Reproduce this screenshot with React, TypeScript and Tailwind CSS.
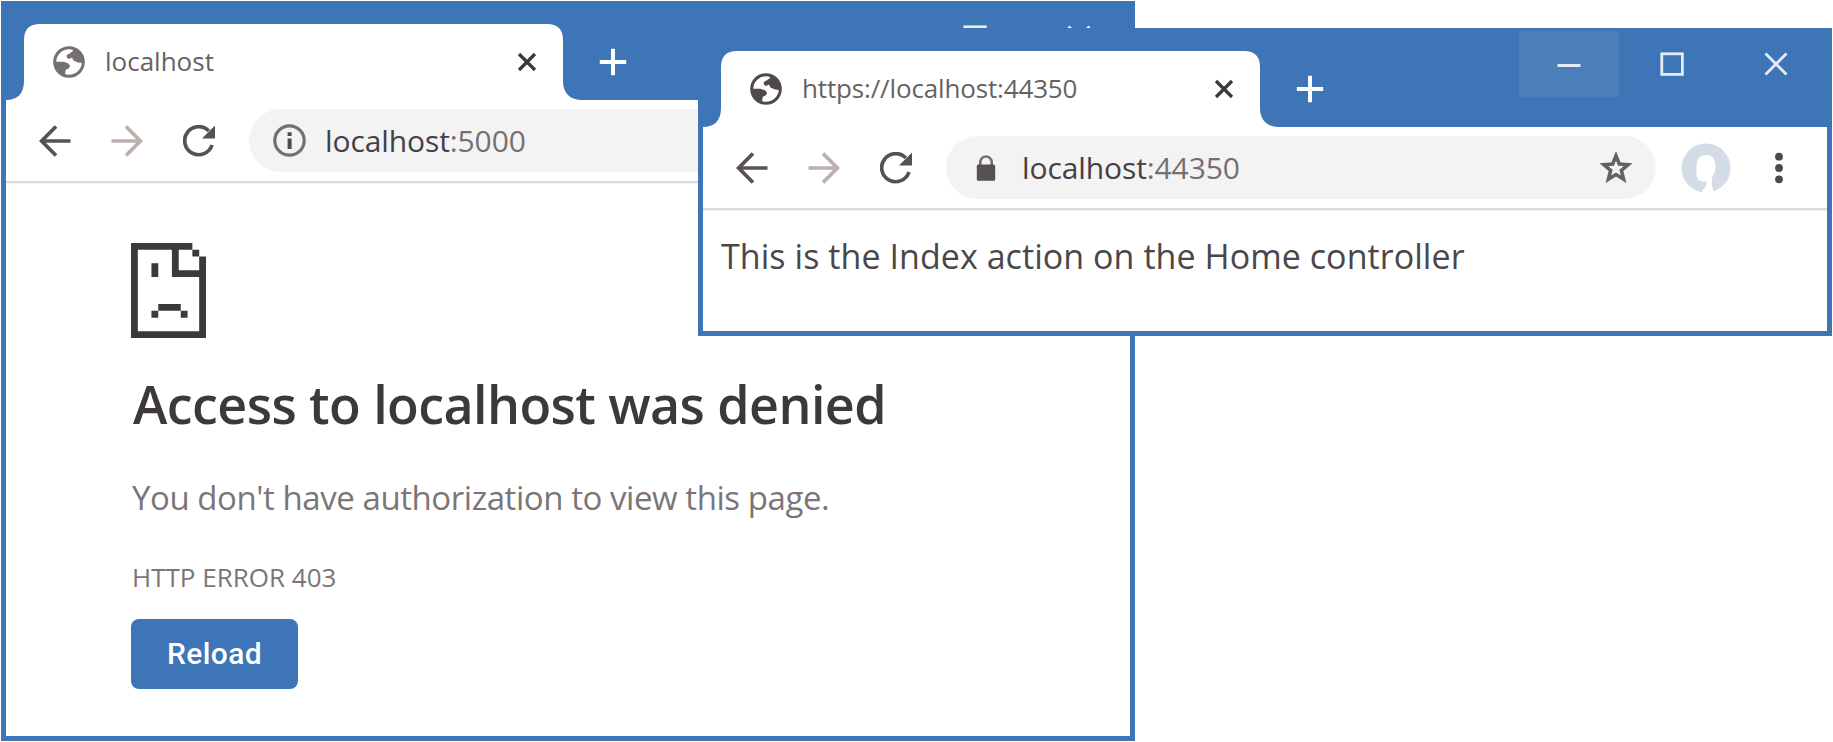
import type { ReactNode } from "react";

function Globe({ className }: { className: string }) {
  return (
    <svg className={`h-8 w-8 ${className}`} viewBox="0 0 32 32">
      <circle cx="16" cy="16" r="14.3" fill="none" stroke="currentColor" strokeWidth="3" />
      <path
        fill="currentColor"
        d="M19.5 2.5 20 5 17 7.200 13.800 9 13.800 11.400 16 13 19 11.600 20.500 14.500 25 16.500 30 17 29 9 24 3.500ZM2 15.800H10.500L15 17.200 17.200 20 15.500 22.400 12.800 23.700 12 28 11 30 5 26 1.500 19Z"
      />
    </svg>
  );
}

function TabClose() {
  return (
    <svg className="h-5 w-5 text-[#3c383b]" viewBox="0 0 20 20">
      <path d="M2 2 18 18M18 2 2 18" stroke="currentColor" strokeWidth="3.200" />
    </svg>
  );
}

function Plus() {
  return (
    <svg className="h-7 w-7 text-white" viewBox="0 0 28 28">
      <path d="M14 .8V27.200M.8 14H27.200" stroke="currentColor" strokeWidth="4" />
    </svg>
  );
}

function Arrow({ className }: { className: string }) {
  return (
    <svg className={`h-8 w-8 ${className}`} viewBox="0 0 32 32" fill="none">
      <path d="M17 1.500 2.600 16 17 30.500M3 16H31.500" stroke="currentColor" strokeWidth="3.700" />
    </svg>
  );
}

function Refresh() {
  return (
    <svg className="h-8 w-8 text-[#575154]" viewBox="0 0 32 32" fill="none">
      <path d="M29 20A14 14 0 1 1 25.800 6" stroke="currentColor" strokeWidth="3.700" />
      <path d="M32 .5V13.500H19Z" fill="currentColor" />
    </svg>
  );
}

function Info() {
  return (
    <svg className="h-[33px] w-[33px] text-[#766f71]" viewBox="0 0 33 33">
      <circle cx="16.500" cy="16.500" r="14.700" fill="none" stroke="currentColor" strokeWidth="3.200" />
      <path d="M14.600 8.200h4v3.800h-4zM14.600 14.500h4v10.500h-4z" fill="#4f494c" />
    </svg>
  );
}

function Lock() {
  return (
    <svg className="h-[26px] w-5 text-[#575154]" viewBox="0 0 20 26">
      <path d="M4.300 11V7.200a5.700 5.700 0 0 1 11.400 0V11" fill="none" stroke="#766f71" strokeWidth="2.600" />
      <rect x=".8" y="9.500" width="18.400" height="16.300" rx="1.500" fill="currentColor" />
    </svg>
  );
}

function Star() {
  return (
    <svg className="h-8 w-8 text-[#686164]" viewBox="0 0 32 32">
      <path
        d="M16 3.800 19.300 12 28.200 12.700 21.400 18.500 23.600 27.200 16 22.500 8.400 27.200 10.600 18.500 3.800 12.700 12.700 12Z"
        fill="none"
        stroke="currentColor"
        strokeWidth="3.600"
      />
    </svg>
  );
}

function Avatar() {
  return (
    <svg className="h-[50px] w-[50px]" viewBox="0 0 50 50">
      <circle cx="25" cy="25" r="24.500" fill="#d3dce7" />
      <path
        d="M25 12C18.500 12 15.500 16.500 15.500 23V30C15.500 35.500 17.500 38 21.500 38.500H26C26 42 24 45 21.500 47.500L21 50H33L32 46C30.500 43 30.500 40 31 36 31.500 32 34.500 30 34.500 23 34.500 16.500 31.500 12 25 12Z"
        fill="#fff"
      />
    </svg>
  );
}

function Menu() {
  return (
    <svg className="h-8 w-2 text-[#4f494c]" viewBox="0 0 8 32" fill="currentColor">
      <circle cx="4" cy="4.700" r="3.900" />
      <circle cx="4" cy="16" r="3.900" />
      <circle cx="4" cy="27.300" r="3.900" />
    </svg>
  );
}

function WindowControls({ highlight }: { highlight: string }) {
  return (
    <div className="mr-[5px] flex h-[66px] text-[#e6edf5]">
      <div className={`flex w-[100px] items-center justify-center ${highlight}`}>
        <svg className="h-6 w-6" viewBox="0 0 24 24">
          <path d="M.5 13.500H23.500" stroke="currentColor" strokeWidth="3" />
        </svg>
      </div>
      <div className="flex w-[106px] items-center justify-center">
        <svg className="h-6 w-6" viewBox="0 0 24 24">
          <rect x="1.800" y="1.800" width="20.600" height="20.600" fill="none" stroke="currentColor" strokeWidth="2.800" />
        </svg>
      </div>
      <div className="flex w-[102px] items-center justify-center">
        <svg className="h-6 w-6" viewBox="0 0 24 24">
          <path d="M1.500 1.500 22.500 22.500M22.500 1.500 1.500 22.500" stroke="currentColor" strokeWidth="2.800" />
        </svg>
      </div>
    </div>
  );
}

type WindowProps = {
  frame: string;
  highlight?: string;
  title: ReactNode;
  globe: string;
  badge: ReactNode;
  port: string;
  children: ReactNode;
};

function BrowserWindow({ frame, highlight = "", title, globe, badge, port, children }: WindowProps) {
  return (
    <section className={`absolute flex w-[1134px] flex-col bg-[#3d75b6] ${frame}`}>
      <header className="flex h-[99px] shrink-0 items-start justify-between pl-[23px]">
        <div className="flex pt-[23px]">
          <div className="relative flex h-[76px] w-[539px] items-center justify-between pr-[26px] pl-[29px]">
            <svg className="absolute top-0 -left-[18px] h-[76px] w-[575px]" viewBox="0 0 575 76">
              <path
                d="M0 76C11 76 18 70 18 57V16Q18 0 34 0H541Q557 0 557 16V57C557 69 564 76 576 76Z"
                fill="#fff"
              />
            </svg>
            <div className="relative flex items-center gap-5">
              <Globe className={globe} />
              <div className="pb-[2px]">{title}</div>
            </div>
            <div className="relative">
              <TabClose />
            </div>
          </div>
          <div className="ml-9 flex h-[76px] items-center">
            <Plus />
          </div>
        </div>
        <div className="pt-[3px]">
          <WindowControls highlight={highlight} />
        </div>
      </header>
      <div className="mx-[5px] mb-[5px] flex flex-1 flex-col bg-white">
        <div className="flex h-[83px] shrink-0 items-center border-b-2 border-[#d5dde8] pl-[33px] shadow-[0_1px_0_#f1f1f1]">
          <Arrow className="text-[#575154]" />
          <Arrow className="ml-[40px] rotate-180 text-[#bcb0ae]" />
          <div className="ml-[40px]">
            <Refresh />
          </div>
          <div className="ml-[34px] flex h-[63px] w-[710px] items-center justify-between rounded-full bg-[#f3f3f3] pr-[24px]">
            <div className="flex items-center">
              <div className="flex w-[76px] justify-center pl-[4px]">{badge}</div>
              <div className="text-[30px] leading-9 tracking-[-0.1px] whitespace-pre text-[#454043]">
                localhost<span className="text-[#766f71]">:{port}</span>
              </div>
            </div>
            <Star />
          </div>
          <div className="ml-[25px]">
            <Avatar />
          </div>
          <div className="ml-[44px]">
            <Menu />
          </div>
        </div>
        {children}
      </div>
    </section>
  );
}

function SadPage() {
  return (
    <svg className="h-[95px] w-[75px] text-[#3c383b]" viewBox="0 0 11 14" preserveAspectRatio="none" fill="currentColor">
      <path d="M0 0H9V1H7V4H10V2H11V14H0ZM1 1V13H10V5H6V1Z" fillRule="evenodd" />
      <path d="M9 1h1v1h-1zM3 3h1v2h-1zM4 9h3.300v1h-3.300zM3 10h1v1h-1zM7.300 10h1v1h-1z" />
    </svg>
  );
}

export default function App() {
  return (
    <main className="relative h-[742px] w-[1833px] overflow-hidden bg-white font-['Open_Sans','Noto_Sans',sans-serif]">
      <BrowserWindow
        frame="left-px top-px h-[740px]"
        globe="text-[#766f71]"
        title={<span className="text-[26px] leading-9 text-[#686164]">localhost</span>}
        badge={<Info />}
        port="5000"
      >
        <div className="flex flex-col items-start pt-[60px] pl-[125px] whitespace-nowrap">
          <SadPage />
          <h1 className="mt-[31px] ml-[2px] text-[52px] leading-[70px] font-semibold tracking-[-0.58px] text-[#3c383b]">
            Access to localhost was denied
          </h1>
          <p className="mt-[36px] ml-px text-[33px] leading-[46px] tracking-[-0.44px] text-[#7c7577]">
            You don't have authorization to view this page.
          </p>
          <p className="mt-[38px] ml-px text-[26px] leading-9 text-[#7c7577]">HTTP ERROR 403</p>
          <button className="mt-[24px] h-[70px] w-[167px] rounded-lg bg-[#3d75b6] pb-[2px] font-['Roboto',sans-serif] text-[30px] font-medium tracking-[0.4px] text-white">
            Reload
          </button>
        </div>
      </BrowserWindow>
      <BrowserWindow
        frame="left-[698px] top-[28px] h-[308px]"
        highlight="bg-[#4b7fba]"
        globe="text-[#4f494c]"
        title={<span className="text-[26px] leading-9 tracking-[-0.15px] text-[#686164]">https://localhost:44350</span>}
        badge={<Lock />}
        port="44350"
      >
        <p className="pt-[23px] pl-[18px] text-[34px] leading-[46px] tracking-[0.06px] whitespace-nowrap text-[#4b4649]">
          This is the Index action on the Home controller
        </p>
      </BrowserWindow>
    </main>
  );
}
